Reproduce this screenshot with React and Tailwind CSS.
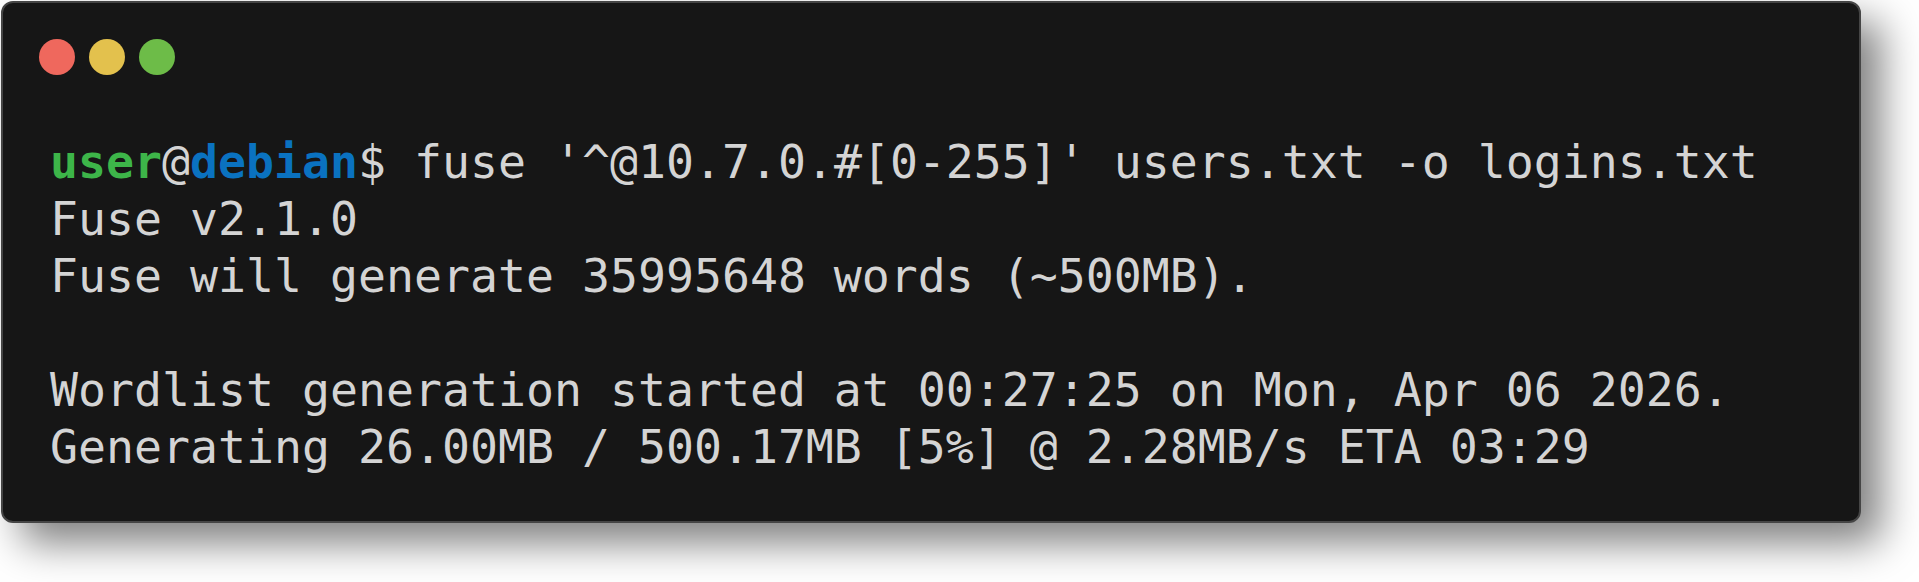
export default function App() {
  const lines = [
    "Fuse v2.1.0",
    "Fuse will generate 35995648 words (~500MB).",
    " ",
    "Wordlist generation started at 00:27:25 on Mon, Apr 06 2026.",
    "Generating 26.00MB / 500.17MB [5%] @ 2.28MB/s ETA 03:29",
  ];
  return (
    <div className="w-[1919px] h-[582px] bg-white pl-px pt-px overflow-hidden">
      <div className="w-[1860px] h-[522px] bg-[#161616] border-2 border-[#454545] rounded-[12px] shadow-[20px_20px_40px_rgba(0,0,0,0.5)] pl-[36px] pt-[36px] flex flex-col">
        <div className="flex gap-[14px]">
          <div className="w-[36px] h-[36px] rounded-full bg-[#ef685d]" />
          <div className="w-[36px] h-[36px] rounded-full bg-[#e3c14d]" />
          <div className="w-[36px] h-[36px] rounded-full bg-[#6dbc48]" />
        </div>
        <div className="mt-[59px] ml-[11px] font-['DejaVu_Sans_Mono',monospace] text-[46.5px] leading-[57px] text-[#d4d4d4] whitespace-pre">
          <div>
            <span className="font-bold text-[#3db549]">user</span>
            <span>@</span>
            <span className="font-bold text-[#0a72c0]">debian</span>
            <span>$ fuse '^@10.7.0.#[0-255]' users.txt -o logins.txt</span>
          </div>
          {lines.map((l, i) => (
            <div key={i}>{l}</div>
          ))}
        </div>
      </div>
    </div>
  );
}
